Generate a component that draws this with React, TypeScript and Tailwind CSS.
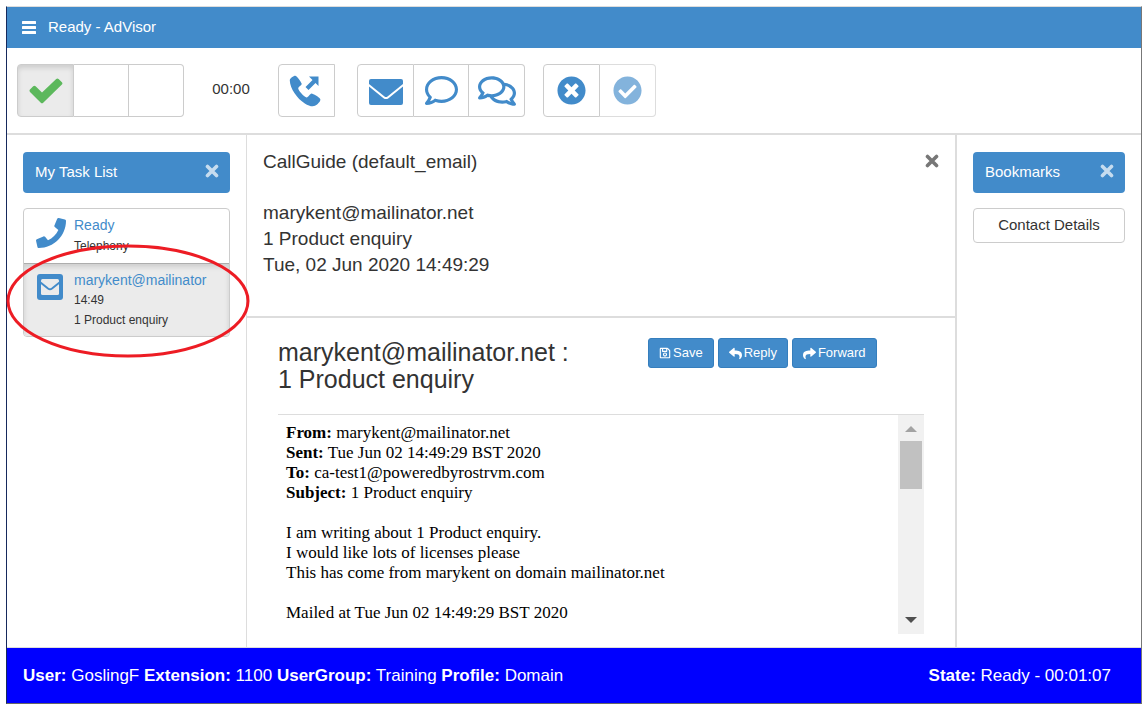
import type { ReactNode } from "react";
import {
  FaCheckCircle,
  FaPhone,
  FaRegComment,
  FaRegComments,
  FaRegSave,
  FaReply,
  FaShare,
  FaTimesCircle,
} from "react-icons/fa";

const footerInfo = [
  { label: "User:", value: "GoslingF" },
  { label: "Extension:", value: "1100" },
  { label: "UserGroup:", value: "Training" },
  { label: "Profile:", value: "Domain" },
];

const mailHeaders = [
  { label: "From:", value: "marykent@mailinator.net" },
  { label: "Sent:", value: "Tue Jun 02 14:49:29 BST 2020" },
  { label: "To:", value: "ca-test1@poweredbyrostrvm.com" },
  { label: "Subject:", value: "1 Product enquiry" },
];

const MenuIcon = () => (
  <svg viewBox="0 0 14 13" fill="currentColor" className="h-[13px] w-[14px]">
    <rect width="14" height="3" rx="0.5" />
    <rect y="5" width="14" height="3" rx="0.5" />
    <rect y="10" width="14" height="3" rx="0.5" />
  </svg>
);

const CheckIcon = () => (
  <svg viewBox="0 0 34 26" fill="currentColor" className="h-[26px] w-[34px] text-[#5cb85c]">
    <path d="M1 11.500l3.200-3.200q1.200-1 2.400 0L13 14.500 27.200.9q1.200-1 2.400 0l3.300 3.300q1 1.200 0 2.400L14.200 24.800q-1.200 1-2.400 0L1 13.900q-1-1.200 0-2.400z" />
  </svg>
);

const OutgoingCallIcon = () => (
  <svg viewBox="0 0 32 32" fill="currentColor" className="h-8 w-8">
    <path d="M.8 5.500C.6 3.500 4.500.8 6.200.8 8 1.200 11.800 6.500 12.700 8.800c.4 1.400-3.300 2.900-3.500 4.400.2 2.200 4.800 7.600 8.300 9.200 1.600.4 3.500-3.600 5-3.800 1.800.2 7.200 3.400 8.700 5.400.9 2-2.700 5.400-5.200 6.800-2.600 1.200-6.400 0-10.200-2.400C8 23.500 1 13.500.8 5.500z" />
    <path d="M20 1.500h9.500V11l-3-3-7 7-3-3 7-7z" />
  </svg>
);

const EnvelopeIcon = () => (
  <svg viewBox="0 0 34 26" fill="currentColor" className="h-[26px] w-[34px]">
    <path d="M2 0h30q2 0 2 2v3L18.500 17.500q-1.500 1-3 0L0 5V2q0-2 2-2z" />
    <path d="M0 7.500l14.500 11.700q2.500 1.700 5 0L34 7.500V24q0 2-2 2H2q-2 0-2-2z" />
  </svg>
);

const MailSquareIcon = () => (
  <svg viewBox="0 0 26 26" className="mt-1 h-[26px] w-[26px] text-[#428bca]">
    <rect width="26" height="26" rx="3" fill="currentColor" />
    <rect x="4" y="5" width="18" height="16" rx="1.500" fill="#ebebeb" />
    <path
      d="M3.500 8.500l7.500 6q2 1.400 4 0l7.500-6"
      fill="none"
      stroke="currentColor"
      strokeWidth="2"
    />
  </svg>
);

const CloseIcon = () => (
  <svg
    viewBox="0 0 14 14"
    className="h-[14px] w-[14px]"
    fill="none"
    stroke="currentColor"
    strokeLinecap="round"
  >
    <path d="M2.500 2.500l9 9M11.500 2.500l-9 9" strokeWidth="3.600" />
  </svg>
);

const ToolButton = ({
  label,
  className = "",
  children,
}: {
  label: string;
  className?: string;
  children?: ReactNode;
}) => (
  <button
    type="button"
    aria-label={label}
    className={`flex h-[53px] items-center justify-center border-[#ccc] text-[#428bca] ${className}`}
  >
    {children}
  </button>
);

const MailButton = ({ icon, text }: { icon: ReactNode; text: string }) => (
  <button
    type="button"
    className="flex h-[30px] items-center gap-[2px] rounded-[3px] border border-[#357ebd] bg-[#428bca] px-[10px] text-[13px] text-white"
  >
    {icon}
    {text}
  </button>
);

const PanelHeading = ({ title }: { title: string }) => (
  <div className="flex h-[41px] items-start justify-between rounded bg-[#428bca] pt-3 pr-[11px] pl-3 text-white">
    <h2 className="text-[15px] leading-4">{title}</h2>
    <button type="button" aria-label={`Close ${title}`} className="text-white/70">
      <CloseIcon />
    </button>
  </div>
);

const App = () => {
  return (
    <div className="min-h-screen bg-white pt-[6px] pr-1 pb-[6px] pl-[6px] font-['Liberation_Sans',Arial,sans-serif] text-[#333]">
      <div className="flex min-h-[calc(100vh-12px)] flex-col border border-t-[#ddd] border-r-[#777] border-b-[#666] border-l-[#16295c]">
        <header className="flex h-[41px] items-center gap-3 bg-[#428bca] pr-4 pl-[15px] text-[15px] text-white">
          <button type="button" aria-label="Menu">
            <MenuIcon />
          </button>
          <h1>Ready - AdVisor</h1>
        </header>

        {/* Toolbar */}
        <div className="flex items-start border-b-2 border-[#ddd] px-[10px] py-4">
          <div className="flex">
            <ToolButton
              label="Ready"
              className="w-[57px] rounded-l border border-[#adadad] bg-[#ebebeb] shadow-[inset_0_3px_5px_rgba(0,0,0,0.125)]"
            >
              <CheckIcon />
            </ToolButton>
            <ToolButton label="Not ready" className="w-[55px] border-y border-r" />
            <ToolButton label="Away" className="w-[55px] rounded-r border-y border-r" />
          </div>
          <span className="w-[94px] pt-[14px] text-center text-[15px]">00:00</span>
          <ToolButton label="Call out" className="w-[57px] rounded-l border pr-1">
            <OutgoingCallIcon />
          </ToolButton>
          <div className="ml-[22px] flex">
            <ToolButton label="Email" className="w-[57px] rounded-l border pt-[2px]">
              <EnvelopeIcon />
            </ToolButton>
            <ToolButton label="Chat" className="w-[55px] border-y border-r">
              <FaRegComment className="h-[33px] w-[33px]" />
            </ToolButton>
            <ToolButton label="Group chat" className="w-14 rounded-r border-y border-r">
              <FaRegComments className="h-[38px] w-[38px]" />
            </ToolButton>
          </div>
          <div className="ml-[18px] flex">
            <ToolButton label="Cancel" className="w-[57px] rounded-l border">
              <FaTimesCircle className="h-[29px] w-[29px]" />
            </ToolButton>
            <ToolButton label="Complete" className="w-14 rounded-r border-y border-r opacity-65">
              <FaCheckCircle className="h-[29px] w-[29px]" />
            </ToolButton>
          </div>
        </div>

        <div className="flex flex-1">
          {/* Task list */}
          <aside className="w-60 shrink-0 border-r border-[#ddd] px-4 pt-[17px]">
            <PanelHeading title="My Task List" />
            <div className="relative mt-[15px]">
              <ul className="rounded border border-[#ccc] text-xs">
                <li className="flex h-[54px] gap-2 pt-[6px] pl-3">
                  <FaPhone className="mt-[3px] h-[30px] w-[30px] text-[#428bca]" />
                  <div className="leading-[21px]">
                    <a href="#ready" className="block text-sm leading-[21px] text-[#428bca]">
                      Ready
                    </a>
                    <p>Telephony</p>
                  </div>
                </li>
                <li className="flex h-[73px] gap-[11px] rounded-b border-t border-[#adadad] bg-[#ebebeb] pt-[6px] pl-[13px] shadow-[inset_0_3px_5px_rgba(0,0,0,0.125)]">
                  <MailSquareIcon />
                  <div className="leading-5">
                    <a href="#mail" className="block text-sm leading-5 text-[#428bca]">
                      marykent@mailinator
                    </a>
                    <p>14:49</p>
                    <p>1 Product enquiry</p>
                  </div>
                </li>
              </ul>
              {/* Red ring around the selected task */}
              <svg
                viewBox="0 0 244 116"
                className="pointer-events-none absolute top-[35px] -left-[17px] h-[116px] w-[244px]"
                fill="none"
                stroke="#ed1c24"
                strokeWidth="3"
              >
                <ellipse cx="122" cy="58" rx="120" ry="55" />
              </svg>
            </div>
          </aside>

          <main className="min-w-0 flex-1">
            <section className="flex justify-between border-b-2 border-[#ddd] px-4 pt-[14px] pb-[38px] text-[19px] leading-[26px]">
              <div>
                <p>CallGuide (default_email)</p>
                <p className="mt-[25px]">marykent@mailinator.net</p>
                <p>1 Product enquiry</p>
                <p>Tue, 02 Jun 2020 14:49:29</p>
              </div>
              <button type="button" aria-label="Close" className="self-start pt-[5px] text-[#777]">
                <CloseIcon />
              </button>
            </section>

            <section className="pt-5 pr-[31px] pb-[13px] pl-[31px]">
              <div className="flex items-start">
                <h2 className="w-[370px] pt-px text-[25px] leading-[27px]">
                  marykent@mailinator.net :
                  <br />1 Product enquiry
                </h2>
                <div className="flex gap-1">
                  <MailButton icon={<FaRegSave className="h-3 w-3" />} text="Save" />
                  <MailButton icon={<FaReply className="h-[13px] w-[13px]" />} text="Reply" />
                  <MailButton icon={<FaShare className="h-[13px] w-[13px]" />} text="Forward" />
                </div>
              </div>

              <div className="mt-[21px] flex h-[220px] border-t border-[#ddd]">
                <article className="flex-1 pt-2 pl-2 font-['Liberation_Serif','Times_New_Roman',serif] text-[17px] leading-5 text-black">
                  {mailHeaders.map((h) => (
                    <p key={h.label}>
                      <b>{h.label}</b> {h.value}
                    </p>
                  ))}
                  <p className="mt-5">I am writing about 1 Product enquiry.</p>
                  <p>I would like lots of licenses please</p>
                  <p>This has come from marykent on domain mailinator.net</p>
                  <p className="mt-5">Mailed at Tue Jun 02 14:49:29 BST 2020</p>
                </article>
                {/* Scrollbar */}
                <div className="flex w-[26px] flex-col items-center bg-[#f1f1f1]">
                  <svg viewBox="0 0 12 6" className="mt-[11px] h-[6px] w-3" fill="#a3a3a3">
                    <path d="M6 0l6 6H0z" />
                  </svg>
                  <div className="mt-[9px] h-12 w-[22px] bg-[#c1c1c1]" />
                  <svg viewBox="0 0 12 6" className="mt-auto mb-[11px] h-[6px] w-3" fill="#505050">
                    <path d="M6 6l6-6H0z" />
                  </svg>
                </div>
              </div>
            </section>
          </main>

          <aside className="w-[186px] shrink-0 border-l-2 border-[#ddd] px-4 pt-[17px]">
            <PanelHeading title="Bookmarks" />
            <button
              type="button"
              className="mt-[15px] h-[35px] w-full rounded border border-[#ccc] text-[15px]"
            >
              Contact Details
            </button>
          </aside>
        </div>

        <footer className="flex h-14 items-center justify-between border-t border-[#ddd] bg-[#0000ff] pr-[30px] pl-4 text-[17px] text-white">
          <p>
            {footerInfo.map((f) => (
              <span key={f.label}>
                <b>{f.label}</b> {f.value}{" "}
              </span>
            ))}
          </p>
          <p>
            <b>State:</b> Ready - 00:01:07
          </p>
        </footer>
      </div>
    </div>
  );
};

export default App;
